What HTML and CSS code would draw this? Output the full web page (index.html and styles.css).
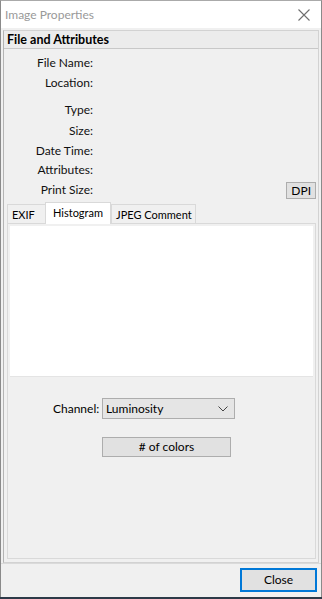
FILE: index.html
```html
<!DOCTYPE html>
<html>
<head>
<meta charset="utf-8">
<link rel="stylesheet" href="styles.css">
</head>
<body>
<div class="window">
  <div class="titlebar">
    <span class="title">Image Properties</span>
    <svg class="close-x" width="12" height="12" viewBox="0 0 12 12"><path d="M0.5 0.5 L11.5 11.5 M11.5 0.5 L0.5 11.5" stroke="#6e6e6e" stroke-width="1.1" fill="none"/></svg>
  </div>
  <div class="client">
    <div class="group">
      <div class="group-head">File and Attributes</div>
      <div class="group-body">
        <div class="fields">
          <div class="row r-name"><span class="lbl">File Name:</span></div>
          <div class="row r-loc"><span class="lbl">Location:</span></div>
          <div class="row r-type"><span class="lbl">Type:</span></div>
          <div class="row r-size"><span class="lbl">Size:</span></div>
          <div class="row r-date"><span class="lbl">Date Time:</span></div>
          <div class="row r-attr"><span class="lbl">Attributes:</span></div>
          <div class="row r-print"><span class="lbl">Print Size:</span><span class="dpi">DPI</span></div>
        </div>
        <div class="tabs">
          <div class="tab t-exif">EXIF</div>
          <div class="tab active">Histogram</div>
          <div class="tab t-jpeg">JPEG Comment</div>
        </div>
        <div class="tabpanel">
          <div class="hist"></div>
          <div class="controls">
            <div class="channel-row">
              <span class="ch-lbl">Channel:</span>
              <div class="select"><span>Luminosity</span>
                <svg width="10" height="6" viewBox="0 0 10 6"><path d="M0.5 0.5 L5 5 L9.5 0.5" stroke="#444" stroke-width="1" fill="none"/></svg>
              </div>
            </div>
            <div class="colors-btn">#&nbsp;of colors</div>
          </div>
        </div>
      </div>
    </div>
    <div class="footer">
      <div class="close-btn">Close</div>
    </div>
  </div>
</div>
</body>
</html>
```
FILE: styles.css
```css
html, body {
  margin: 0;
  padding: 0;
}
body {
  width: 322px;
  height: 599px;
  background: #2d3a48;
  font-family: Lato, "Liberation Sans", sans-serif;
  font-size: 12px;
  color: #000;
  overflow: hidden;
}
.window {
  width: 320px;
  height: 596px;
  border: 1px solid #8a8a8a;
  border-top-color: #aaaaaa;
  border-bottom: none;
  background: #f0f0f0;
  display: flex;
  flex-direction: column;
}
.titlebar {
  height: 27px;
  background: #ffffff;
  display: flex;
  align-items: center;
  justify-content: space-between;
  padding: 0 11px 0 4px;
}
.title {
  color: #999999;
  font-size: 12px;
}
.close-x { display: block; }
.client {
  flex: 1;
  display: flex;
  flex-direction: column;
  padding: 2px 2px 0 2px;
}
.group {
  flex: 1;
  border: 1px solid #d2d2d2;
  border-left-color: #b4b4b4;
  display: flex;
  flex-direction: column;
}
.group-head {
  height: 17px;
  line-height: 17px;
  font-weight: bold;
  padding-left: 3px;
  border-bottom: 1px solid #c8c8c8;
  background: #ececec;
  font-size: 12.5px;
}
.group-body {
  flex: 1;
  display: flex;
  flex-direction: column;
  padding: 0 2px 2px 3px;
}
.fields {
  display: flex;
  flex-direction: column;
  padding-top: 4px;
}
.row {
  display: flex;
  align-items: center;
  height: 20px;
}
.r-loc { height: 26px; align-items: flex-start; }
.r-type, .r-size { height: 21px; }
.r-date, .r-attr { height: 19.5px; }
.lbl {
  width: 86px;
  text-align: right;
  white-space: nowrap;
  color: #111;
  line-height: 20px;
}
.dpi {
  margin-left: auto;
  border: 1px solid #adadad;
  background: #e1e1e1;
  padding: 0 4px;
  height: 15px;
  line-height: 15px;
  font-size: 12px;
}
.tabs {
  display: flex;
  align-items: flex-end;
  height: 23px;
  padding-left: 0;
  position: relative;
  z-index: 1;
}
.tab {
  height: 18px;
  line-height: 19px;
  border: 1px solid #d9d9d9;
  border-bottom: none;
  background: #f0f0f0;
  padding: 0 4px;
  font-size: 11px;
  margin-right: -1px;
}
.t-exif { width: 29px; }
.t-jpeg { padding: 0 3px 0 4px; }
.tab.active {
  height: 21px;
  line-height: 20px;
  background: #ffffff;
  padding: 0 7px 0 7px;
  margin: 0 0 -1px 0;
  position: relative;
}
.tabpanel {
  flex: 1;
  border: 1px solid #d9d9d9;
  background: #f0f0f0;
  display: flex;
  flex-direction: column;
  padding: 2px;
  margin-bottom: 1px;
}
.hist {
  height: 150px;
  background: #ffffff;
}
.controls {
  flex: 1;
  border-top: 1px solid #e4e4e4;
  display: flex;
  flex-direction: column;
  align-items: flex-start;
  padding-top: 21px;
  padding-left: 43px;
}
.channel-row {
  display: flex;
  align-items: center;
}
.ch-lbl {
  width: 47px;
  margin-right: 2px;
  text-align: left;
}
.select {
  width: 122px;
  height: 19px;
  border: 1px solid #adadad;
  background: #e5e5e5;
  display: flex;
  align-items: center;
  justify-content: space-between;
  padding: 0 6px 0 3px;
}
.colors-btn {
  margin-top: 18px;
  margin-left: 49px;
  width: 127px;
  height: 18px;
  line-height: 18px;
  border: 1px solid #adadad;
  background: #e1e1e1;
  text-align: center;
}
.footer {
  height: 29px;
  border-top: 1px solid #dadada;
  margin: 0 -2px;
  display: flex;
  align-items: flex-start;
  justify-content: flex-end;
  padding-top: 4px;
  padding-right: 4px;
}
.close-btn {
  width: 73px;
  height: 20px;
  line-height: 20px;
  border: 2px solid #0078d7;
  background: #e1e1e1;
  text-align: center;
}
```
